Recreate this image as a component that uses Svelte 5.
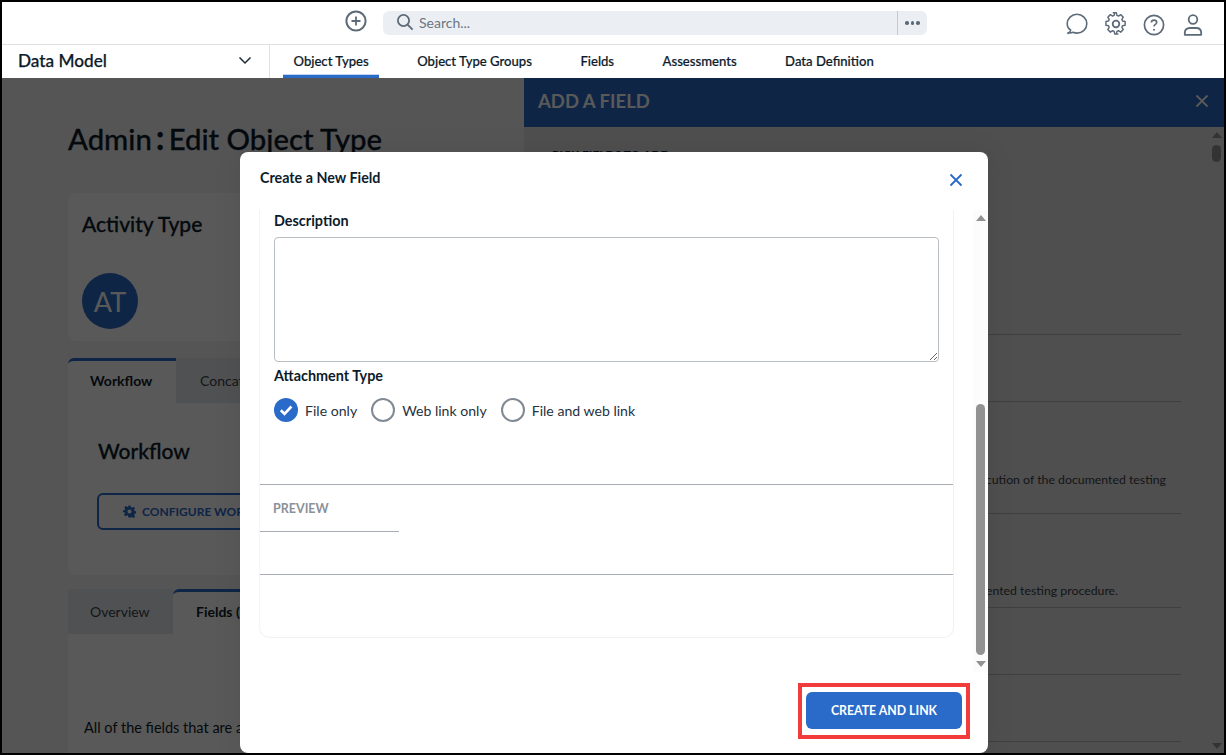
<script>
  const navItems = ["Object Types", "Object Type Groups", "Fields", "Assessments", "Data Definition"];
  const options = [
    { label: "File only", checked: true },
    { label: "Web link only", checked: false },
    { label: "File and web link", checked: false }
  ];
</script>

<div class="frame">
  <header class="topbar">
    <svg class="add" width="24" height="24" viewBox="0 0 24 24" fill="none" stroke="#5d6b78" stroke-width="2">
      <circle cx="12" cy="12" r="9.6" />
      <path d="M12 7.5v9M7.5 12h9" stroke-width="1.8" />
    </svg>
    <div class="search">
      <svg width="18" height="18" viewBox="0 0 18 18" fill="none" stroke="#5d6b78" stroke-width="1.8">
        <circle cx="7.5" cy="7.5" r="5.6" />
        <path d="M11.6 11.6l5 5" />
      </svg>
      <span class="placeholder">Search...</span>
      <span class="more"><i></i><i></i><i></i></span>
    </div>
    <div class="actions">
      <svg width="24" height="24" viewBox="0 0 24 24" fill="none" stroke="#5d6b78" stroke-width="1.6" stroke-linejoin="round">
        <path transform="translate(0 -1.500)" d="M3 22c1.500-.8 2.400-1.900 2.700-3.300C3.400 17 2.200 14.700 2.200 12.200 2.200 7 6.500 2.800 12 2.800s9.800 4.200 9.800 9.400-4.300 9.400-9.800 9.400c-1.400 0-2.700-.3-3.900-.8-1.400.6-3.200.8-5.100.6z" />
      </svg>
      <svg class="gear" width="24" height="24" viewBox="0 0 24 24" fill="none" stroke="#5d6b78" stroke-width="1.6" stroke-linejoin="round">
        <path d="M10 2.500h4l.6 2.800 1.700.7 2.400-1.500 2.800 2.800-1.500 2.400.7 1.700 2.800.6v4l-2.800.6-.7 1.700 1.500 2.400-2.800 2.800-2.400-1.500-1.700.7-.6 2.800" transform="translate(-.5 -1.500) scale(.92)" />
        <path d="M10 2.500l-.6 2.800-1.700.7-2.400-1.500-2.800 2.800 1.500 2.400-.7 1.700-2.800.6v4l2.800.6.7 1.700-1.500 2.400 2.800 2.800 2.400-1.500 1.700.7.6 2.800h4" transform="translate(1.500 -1.500) scale(.92)" />
        <circle cx="12" cy="12" r="3.300" stroke-width="1.800" />
      </svg>
      <svg width="24" height="24" viewBox="0 0 24 24" fill="none" stroke="#5d6b78" stroke-width="1.7">
        <circle cx="12" cy="12" r="9.600" />
        <path d="M9.400 9.600c0-1.500 1.200-2.500 2.700-2.500s2.600 1 2.600 2.300c0 2-2.700 2.100-2.700 4.100" stroke-width="1.600" />
        <circle cx="12" cy="16.800" r="1" fill="#5d6b78" stroke="none" />
      </svg>
      <svg width="24" height="24" viewBox="0 0 24 24" fill="none" stroke="#5d6b78" stroke-width="1.800">
        <circle cx="12" cy="6.500" r="4.300" />
        <path d="M3.800 21.800v-2c0-3 2-4.800 5-4.800h6.400c3 0 5 1.800 5 4.800v2z" stroke-linejoin="round" />
      </svg>
    </div>
  </header>

  <nav class="navbar">
    <div class="module">
      <span>Data Model</span>
      <svg width="14" height="14" viewBox="0 0 14 14" fill="none" stroke="#1d2a38" stroke-width="1.500"><path d="M1.500 4.500L7 10l5.500-5.500" /></svg>
    </div>
    <ul>
      {#each navItems as item, i}
        <li class:active={i === 0}>{item}</li>
      {/each}
    </ul>
  </nav>

  <div class="body">
    <main class="page">
      <h1>Admin<b>:</b>Edit Object Type</h1>
      <section class="card summary">
        <h2>Activity Type</h2>
        <div class="avatar">AT</div>
      </section>
      <div class="tabs">
        <div class="tab active first">Workflow</div>
        <div class="tab rest">Concatenated Names</div>
      </div>
      <section class="card tabbed workflow">
        <h2>Workflow</h2>
        <button class="configure">
          <svg width="13" height="13" viewBox="0 0 24 24" fill="#2a6ac9"><path fill-rule="evenodd" d="M10 1h4l.7 3.200 2 .9 2.800-1.800 2.800 2.800-1.800 2.800.9 2 3.200.7v4l-3.200.7-.9 2 1.800 2.800-2.800 2.800-2.800-1.800-2 .9L14 23h-4l-.7-3.200-2-.9-2.800 1.800-2.800-2.800 1.800-2.800-.9-2L0 14v-4l3.200-.7.9-2-1.800-2.800 2.800-2.800 2.800 1.800 2-.9zM12 8.200a3.800 3.800 0 100 7.600 3.800 3.800 0 000-7.600z" /></svg>
          CONFIGURE WORKFLOW
        </button>
      </section>
      <div class="tabs second">
        <div class="tab overview">Overview</div>
        <div class="tab active fields">Fields (12)</div>
      </div>
      <section class="card tabbed fieldlist">
        <p>All of the fields that are available on this object type.</p>
      </section>
    </main>

    <aside class="panel">
      <div class="panel-head">
        <span>ADD A FIELD</span>
        <svg width="14" height="14" viewBox="0 0 14 14" stroke="#fff" stroke-width="1.800"><path d="M1.500 1.500l11 11M12.500 1.500l-11 11" /></svg>
      </div>
      <div class="panel-body">
        <div class="pick">PICK FIELDS TO ADD</div>
        <div class="row r1"></div>
        <div class="row r2"></div>
        <div class="row r3"><p>Verifies the results of the execution of the documented testing</p></div>
        <div class="row r4"><p class="short">Describes the outcome of the documented testing procedure.</p></div>
        <div class="row r2"></div>
        <div class="row r2"></div>
        <div class="track">
          <i class="up"></i>
          <i class="thumb"></i>
          <i class="down"></i>
        </div>
      </div>
    </aside>

    <div class="backdrop"></div>

    <div class="modal">
      <div class="modal-head">
        <span>Create a New Field</span>
        <svg width="14" height="14" viewBox="0 0 14 14" stroke="#2a6ac9" stroke-width="1.800"><path d="M1.500 1.500l11 11M12.500 1.500l-11 11" /></svg>
      </div>
      <div class="modal-scroll">
        <div class="form-card">
          <div class="fields-part">
            <label for="description">Description</label>
            <textarea id="description"></textarea>
            <div class="label">Attachment Type</div>
            <div class="radios">
              {#each options as option}
                <div class="radio">
                  {#if option.checked}
                    <svg width="24" height="24" viewBox="0 0 24 24">
                      <circle cx="12" cy="12" r="12" fill="#2a6ac9" />
                      <path d="M6.800 12.300l3.700 3.500 6.900-7.300" fill="none" stroke="#fff" stroke-width="2.600" />
                    </svg>
                  {:else}
                    <svg width="24" height="24" viewBox="0 0 24 24">
                      <circle cx="12" cy="12" r="11" fill="#fff" stroke="#818a93" stroke-width="2" />
                    </svg>
                  {/if}
                  <span>{option.label}</span>
                </div>
              {/each}
            </div>
          </div>
          <div class="preview">
            <div class="preview-tab">PREVIEW</div>
          </div>
          <div class="preview-body"></div>
        </div>
        <div class="track">
          <i class="up"></i>
          <i class="gap"></i>
          <i class="thumb"></i>
          <i class="down"></i>
        </div>
      </div>
      <div class="modal-foot">
        <div class="callout">
          <button class="primary">CREATE AND LINK</button>
        </div>
      </div>
    </div>
  </div>
</div>

<style>
  :global(body) {
    margin: 0;
    font-family: Lato, "Noto Sans", sans-serif;
    color: #0d1b2a;
  }

  .frame {
    position: relative;
    display: flex;
    flex-direction: column;
    box-sizing: border-box;
    width: 1226px;
    height: 755px;
    border: 2px solid #000;
    overflow: hidden;
    background: #fff;
  }

  .topbar {
    display: flex;
    align-items: center;
    flex: none;
    height: 38px;
    padding: 0 0 4px 342px;
    border-bottom: 1px solid #dfe2e5;
    box-sizing: content-box;
  }

  .search {
    display: flex;
    align-items: center;
    width: 544px;
    height: 24px;
    margin: 4px 0 0 15px;
    padding: 0 0 2px 13px;
    box-sizing: border-box;
    background: #ebeef2;
    border-radius: 6px;
  }

  .placeholder {
    flex: 1;
    margin-left: 5px;
    font-size: 14px;
    color: #6b7681;
  }

  .more {
    display: flex;
    align-items: center;
    justify-content: center;
    gap: 2px;
    width: 29px;
    height: 24px;
    margin-bottom: -2px;
    border-left: 1px solid #c6cbd0;
  }

  .more i {
    width: 3.500px;
    height: 3.500px;
    border-radius: 50%;
    background: #5d6b78;
  }

  .actions {
    display: flex;
    gap: 14.500px;
    margin-left: 138px;
    margin-top: 8px;
  }

  .gear {
    margin-top: -1px;
  }

  .navbar {
    display: flex;
    flex: none;
    height: 33px;
    background: #fff;
  }

  .module {
    display: flex;
    align-items: center;
    justify-content: space-between;
    width: 268px;
    padding: 0 17px 3px 16px;
    box-sizing: border-box;
    border-right: 1px solid #dfe2e5;
    font-size: 17.200px;
    font-weight: 500;
    -webkit-text-stroke: 0.25px #0d1b2a;
  }

  .navbar ul {
    display: flex;
    gap: 27.500px;
    margin: 0;
    padding: 0 0 0 13px;
    list-style: none;
  }

  .navbar li {
    position: relative;
    padding: 0 10.500px;
    line-height: 32px;
    font-size: 13.100px;
    font-weight: 500;
    -webkit-text-stroke: 0.2px #0d1b2a;
    white-space: nowrap;
  }

  .navbar li.active {
    border-bottom: 3px solid #2a6ac9;
    height: 30px;
    line-height: 32px;
    box-shadow: inset 0 -1px 0 #c3d5ee;
  }

  .body {
    position: relative;
    flex: 1;
    display: flex;
    min-height: 0;
    border-left: 1px solid #2a6ac9;
    margin-left: -1px;
  }

  .page {
    width: 522px;
    flex: none;
    padding: 43px 0 0 66px;
    box-sizing: border-box;
    background: #f2f4f7;
    overflow: hidden;
  }

  h1 {
    margin: 0 0 36px;
    height: 36px;
    font-size: 29.300px;
    line-height: 36px;
    font-weight: 500;
    -webkit-text-stroke: 0.3px #0d1b2a;
    white-space: nowrap;
  }

  h1 b {
    margin: 0 4px 0 4px;
    font-size: 34px;
    line-height: 30px;
  }

  h2 {
    margin: 0;
    font-size: 21px;
    font-weight: 500;
    -webkit-text-stroke: 0.3px #0d1b2a;
  }

  .card {
    background: #fff;
    border-radius: 8px;
  }

  .summary {
    height: 148px;
    padding: 18px 14px;
    box-sizing: border-box;
    margin-bottom: 17px;
  }

  .avatar {
    display: flex;
    align-items: center;
    justify-content: center;
    width: 56px;
    height: 56px;
    margin-top: 37px;
    border-radius: 50%;
    background: #2a6ac9;
    color: #fff;
    font-size: 27px;
  }

  .tabs {
    display: flex;
    height: 45px;
  }

  .tab {
    box-sizing: border-box;
    padding-top: 14px;
    font-size: 14px;
    color: #39424c;
    background: #e6e8eb;
  }

  .tab.active {
    background: #fff;
    color: #0d1b2a;
    font-weight: 700;
    border-top: 3px solid #2a6ac9;
    padding-top: 11px;
    border-radius: 6px 0 0 0;
  }

  .first {
    width: 108px;
    padding-left: 22px;
  }

  .rest {
    flex: 1;
    padding-left: 24px;
    white-space: nowrap;
  }

  .tabbed {
    border-radius: 0 0 8px 8px;
  }

  .workflow {
    height: 172px;
    padding: 35px 30px;
    box-sizing: border-box;
    margin-bottom: 14px;
  }

  .configure {
    display: flex;
    align-items: center;
    gap: 6px;
    width: 230px;
    height: 37px;
    margin-top: 30px;
    margin-left: -1px;
    padding: 0 0 0 24px;
    border: 2px solid #2a6ac9;
    border-radius: 6px;
    background: #fff;
    color: #2a6ac9;
    font: 700 12px Lato, sans-serif;
    white-space: nowrap;
  }

  .overview {
    width: 105px;
    padding-left: 22px;
  }

  .fields {
    flex: 1;
    padding-left: 23px;
    border-radius: 0;
  }

  .fieldlist {
    height: 200px;
    padding: 85px 16px 0;
    box-sizing: border-box;
    font-size: 14.500px;
    white-space: nowrap;
  }

  .fieldlist p {
    margin: 0;
  }

  .panel {
    flex: 1;
    display: flex;
    flex-direction: column;
    min-width: 0;
    background: #e2e2e2;
  }

  .panel-head {
    display: flex;
    align-items: center;
    justify-content: space-between;
    flex: none;
    height: 49px;
    padding: 0 15px 4px 14px;
    box-sizing: border-box;
    background: #2a6ac9;
    color: #fff;
    font-size: 18.500px;
    font-weight: 700;
  }

  .panel-body {
    position: relative;
    flex: 1;
    padding: 0 43px 0 28px;
    overflow: hidden;
  }

  .pick {
    height: 1px;
    padding-top: 20px;
    font-size: 12px;
    line-height: 15px;
    font-weight: 700;
    white-space: nowrap;
  }

  .row {
    display: flex;
    align-items: flex-end;
    box-sizing: border-box;
    border-bottom: 1px solid #b6b6b6;
  }

  .row p {
    flex: 1;
    margin: 0;
    font-size: 12.300px;
    text-align: right;
    color: #3a3f45;
    white-space: nowrap;
  }

  .r1 { height: 187px; }
  .r2 { height: 67px; }
  .r3 { height: 112px; padding: 0 15px 26px 0; }
  .r4 { height: 94px; padding: 0 63px 9px 0; }

  .track {
    position: absolute;
    top: 0;
    right: 2px;
    bottom: 0;
    display: flex;
    flex-direction: column;
    align-items: center;
    width: 11px;
  }

  .track .up {
    width: 0;
    height: 0;
    margin-top: 5px;
    border: 5px solid transparent;
    border-top: 0;
    border-bottom: 6px solid #929292;
  }

  .track .thumb {
    width: 9px;
    height: 17px;
    margin-top: 7px;
    border-radius: 5px;
    background: #929292;
  }

  .track .down {
    width: 0;
    height: 0;
    margin-top: auto;
    margin-bottom: 4px;
    border: 5px solid transparent;
    border-bottom: 0;
    border-top: 6px solid #929292;
  }

  .backdrop {
    position: absolute;
    inset: 0;
    background: rgba(0, 0, 0, 0.65);
  }

  .modal {
    position: absolute;
    left: 238px;
    top: 74px;
    display: flex;
    flex-direction: column;
    width: 748px;
    height: 601px;
    border-radius: 8px;
    background: #fff;
    box-shadow: 0 0 30px rgba(0, 0, 0, 0.08);
  }

  .modal-head {
    display: flex;
    justify-content: space-between;
    flex: none;
    height: 58px;
    padding: 17px 25px 0 20px;
    box-sizing: border-box;
    font-size: 14.300px;
    font-weight: 700;
  }

  .modal-head svg {
    margin-top: 4px;
  }

  .modal-scroll {
    position: relative;
    flex: none;
    height: 462px;
    padding: 0 35px 0 20px;
    box-sizing: border-box;
    overflow: hidden;
  }

  .form-card {
    height: 428px;
    border-radius: 0 0 10px 10px;
    border-right: 1px solid #f1f1f1;
    border-bottom: 1px solid #f1f1f1;
    box-shadow: -1px 0 0 #f4f4f4;
    box-sizing: border-box;
    margin-right: -1px;
  }

  .fields-part {
    height: 275px;
    padding: 2px 14px 0;
    box-sizing: border-box;
    border-bottom: 1px solid #a7adb3;
  }

  label,
  .label {
    display: block;
    font-size: 14.400px;
    font-weight: 700;
    line-height: 17px;
  }

  textarea {
    display: block;
    width: 665px;
    height: 125px;
    margin: 8px 0 5px;
    padding: 0;
    box-sizing: border-box;
    border: 1px solid #b9bec3;
    border-radius: 4px;
    background: #fff;
  }

  .radios {
    display: flex;
    gap: 14px;
    margin-top: 14px;
  }

  .radio {
    display: flex;
    align-items: center;
    gap: 7px;
    font-size: 14.100px;
    color: #26323e;
  }

  .preview {
    height: 90px;
    box-sizing: border-box;
    border-bottom: 1px solid #a7adb3;
  }

  .preview-tab {
    width: 139px;
    height: 47px;
    padding: 16px 0 0 13px;
    box-sizing: border-box;
    border-bottom: 1px solid #a7adb3;
    font-size: 12.500px;
    font-weight: 700;
    color: #8a9199;
  }

  .modal-scroll .track {
    right: 0;
    width: 15px;
    background: #fcfcfc;
  }

  .modal-scroll .track .gap {
    flex: none;
    height: 183px;
  }

  .modal-scroll .track .thumb {
    height: 251px;
    margin-top: 0;
  }

  .modal-scroll .track .down {
    margin-bottom: 5px;
  }

  .modal-foot {
    display: flex;
    justify-content: flex-end;
    padding: 11px 18px 0 0;
  }

  .callout {
    padding: 5px 4px 6px;
    border: 4px solid #f23c3c;
  }

  .primary {
    display: block;
    width: 156px;
    height: 37px;
    padding: 0;
    border: 0;
    border-radius: 6px;
    background: #2a6ac9;
    color: #fff;
    font: 700 12.300px Lato, sans-serif;
  }
</style>
